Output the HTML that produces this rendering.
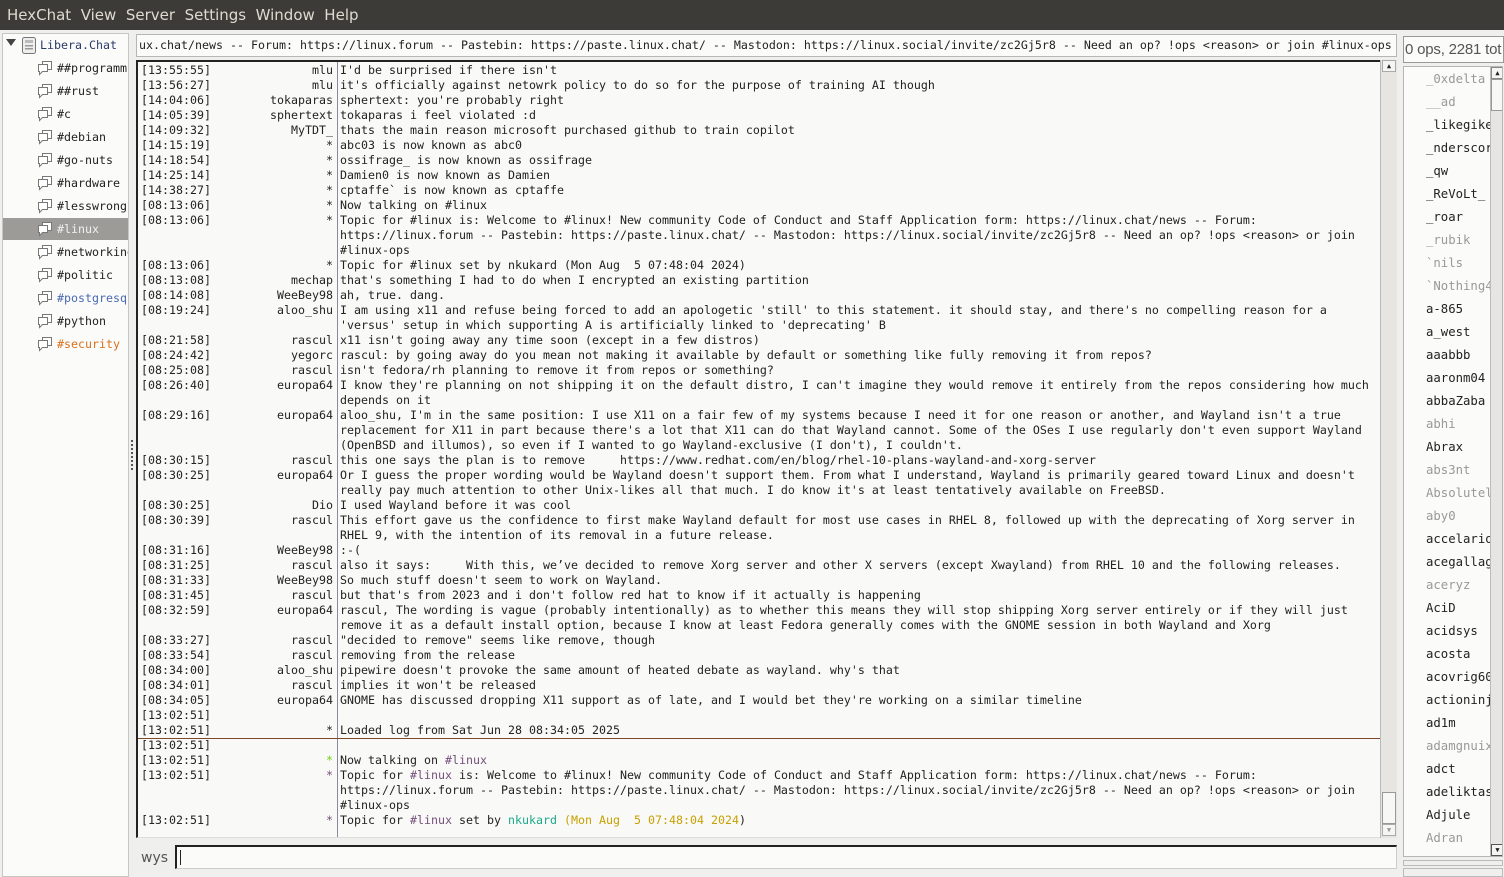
<!DOCTYPE html>
<html><head><meta charset="utf-8"><style>
*{box-sizing:border-box;margin:0;padding:0}
body{width:1504px;height:877px;background:#efefed;position:relative;overflow:hidden;font-family:"DejaVu Sans Mono","Liberation Mono",monospace;font-size:11.63px;color:#222}
.menu{position:absolute;left:0;top:0;width:1504px;height:30px;background:#3c3b37;color:#dfdbd2;font-family:"DejaVu Sans","Liberation Sans",sans-serif;font-size:15px;line-height:30px;white-space:pre;padding-left:7px}
.tree{position:absolute;left:2px;top:33px;width:127px;height:844px;background:#fbfbfa;border:1px solid #c8c6c2;overflow:hidden}
.ti{position:absolute;left:34px;height:22px;line-height:22px;white-space:pre;width:92px;overflow:hidden}
.ti svg{position:absolute;left:0;top:3px}
.ti span{position:absolute;left:20px}
.sel{background:#9d9b97;color:#f0f0f0}
.topic{position:absolute;left:136px;top:34px;width:1261px;height:23px;background:#fbfbfa;border:1px solid #b8b6b2;line-height:21px;white-space:pre;overflow:hidden;padding-left:2px}
.log{position:absolute;left:136px;top:60px;width:1261px;height:778px;background:#f9f9f7;border:2px solid #222;border-right:1px solid #bbb;border-bottom:1px solid #ddd;overflow:hidden}
.r{position:absolute;left:0;height:15px;line-height:15px;white-space:pre;width:1240px;margin-top:1px}
.t{position:absolute;left:3px}
.n{position:absolute;right:1045px;text-align:right}
.m{position:absolute;left:202px}
.sep{position:absolute;left:199px;top:0;width:1px;height:780px;background:#8a8a9a}
.vsb{position:absolute;left:1380px;top:60px;width:17px;height:778px;background:#e6e5e2;border-left:1px solid #bbb}
.p{color:#75507b}.g{color:#1aa88a}.y{color:#c9a000}.ga{color:#73d216}
.ul{position:absolute;left:1403px;top:66px;width:100px;height:791px;background:#fbfbfa;border:1px solid #b8b6b2;overflow:hidden}
.u{position:absolute;left:22px;height:23px;line-height:23px;white-space:pre;font-size:12.3px;margin-top:1px}
.aw{color:#999}
</style></head><body>
<div class="menu">HexChat  View  Server  Settings  Window  Help</div>
<svg width="0" height="0" style="position:absolute"><defs><symbol id="b" viewBox="0 0 16 16"><path d="M5.5 1.5h9v8h-9z" fill="#fff" stroke="#777"/><path d="M1.5 4.5h9v7h-5l-3 3v-3h-1z" fill="#fff" stroke="#777"/></symbol></defs></svg>
<div class="tree">
<div style="position:absolute;left:3px;top:5px;width:0;height:0;border-left:5px solid transparent;border-right:5px solid transparent;border-top:7px solid #444"></div>
<svg style="position:absolute;left:19px;top:3px" width="14" height="17" viewBox="0 0 14 17"><rect x="0.5" y="0.5" width="13" height="16" rx="2" fill="#eee" stroke="#777"/><rect x="3" y="3" width="8" height="3" fill="#bbb"/><rect x="3" y="8" width="8" height="1.5" fill="#999"/><rect x="3" y="11" width="8" height="1.5" fill="#999"/></svg>
<div style="position:absolute;left:37px;top:0;line-height:22px;color:#2a3a6a">Libera.Chat</div>
<div class="ti" style="top:23px"><svg width="16" height="16"><use href="#b"/></svg><span>##programm</span></div>
<div class="ti" style="top:46px"><svg width="16" height="16"><use href="#b"/></svg><span>##rust</span></div>
<div class="ti" style="top:69px"><svg width="16" height="16"><use href="#b"/></svg><span>#c</span></div>
<div class="ti" style="top:92px"><svg width="16" height="16"><use href="#b"/></svg><span>#debian</span></div>
<div class="ti" style="top:115px"><svg width="16" height="16"><use href="#b"/></svg><span>#go-nuts</span></div>
<div class="ti" style="top:138px"><svg width="16" height="16"><use href="#b"/></svg><span>#hardware</span></div>
<div class="ti" style="top:161px"><svg width="16" height="16"><use href="#b"/></svg><span>#lesswrong</span></div>
<div class="ti sel" style="top:184px;left:0;width:127px"><svg width="16" height="16" style="left:34px"><use href="#b"/></svg><span style="left:54px">#linux</span></div>
<div class="ti" style="top:207px"><svg width="16" height="16"><use href="#b"/></svg><span>#networking</span></div>
<div class="ti" style="top:230px"><svg width="16" height="16"><use href="#b"/></svg><span>#politic</span></div>
<div class="ti" style="top:253px;color:#4a6ab0"><svg width="16" height="16"><use href="#b"/></svg><span>#postgresql</span></div>
<div class="ti" style="top:276px"><svg width="16" height="16"><use href="#b"/></svg><span>#python</span></div>
<div class="ti" style="top:299px;color:#d9701a"><svg width="16" height="16"><use href="#b"/></svg><span>#security</span></div>
</div>
<div style="position:absolute;left:131px;top:440px;width:2px;height:30px;border-left:2px dotted #555"></div>
<div class="topic">ux.chat/news -- Forum: https://linux.forum -- Pastebin: https://paste.linux.chat/ -- Mastodon: https://linux.social/invite/zc2Gj5r8 -- Need an op? !ops &lt;reason&gt; or join #linux-ops</div>
<div class="log">
<div class="sep"></div>
<div style="position:absolute;left:0;top:676px;width:1244px;height:1px;background:#7a4a2a"></div>
<div class="r" style="top:0"><span class="t">[13:55:55]</span><span class="n">mlu</span><span class="m">I'd be surprised if there isn't</span></div>
<div class="r" style="top:15px"><span class="t">[13:56:27]</span><span class="n">mlu</span><span class="m">it's officially against netowrk policy to do so for the purpose of training AI though</span></div>
<div class="r" style="top:30px"><span class="t">[14:04:06]</span><span class="n">tokaparas</span><span class="m">sphertext: you're probably right</span></div>
<div class="r" style="top:45px"><span class="t">[14:05:39]</span><span class="n">sphertext</span><span class="m">tokaparas i feel violated :d</span></div>
<div class="r" style="top:60px"><span class="t">[14:09:32]</span><span class="n">MyTDT_</span><span class="m">thats the main reason microsoft purchased github to train copilot</span></div>
<div class="r" style="top:75px"><span class="t">[14:15:19]</span><span class="n">*</span><span class="m">abc03 is now known as abc0</span></div>
<div class="r" style="top:90px"><span class="t">[14:18:54]</span><span class="n">*</span><span class="m">ossifrage_ is now known as ossifrage</span></div>
<div class="r" style="top:105px"><span class="t">[14:25:14]</span><span class="n">*</span><span class="m">Damien0 is now known as Damien</span></div>
<div class="r" style="top:120px"><span class="t">[14:38:27]</span><span class="n">*</span><span class="m">cptaffe` is now known as cptaffe</span></div>
<div class="r" style="top:135px"><span class="t">[08:13:06]</span><span class="n">*</span><span class="m">Now talking on #linux</span></div>
<div class="r" style="top:150px"><span class="t">[08:13:06]</span><span class="n">*</span><span class="m">Topic for #linux is: Welcome to #linux! New community Code of Conduct and Staff Application form: https://linux.chat/news -- Forum:<br>https://linux.forum -- Pastebin: https://paste.linux.chat/ -- Mastodon: https://linux.social/invite/zc2Gj5r8 -- Need an op? !ops &lt;reason&gt; or join<br>#linux-ops</span></div>
<div class="r" style="top:195px"><span class="t">[08:13:06]</span><span class="n">*</span><span class="m">Topic for #linux set by nkukard (Mon Aug  5 07:48:04 2024)</span></div>
<div class="r" style="top:210px"><span class="t">[08:13:08]</span><span class="n">mechap</span><span class="m">that's something I had to do when I encrypted an existing partition</span></div>
<div class="r" style="top:225px"><span class="t">[08:14:08]</span><span class="n">WeeBey98</span><span class="m">ah, true. dang.</span></div>
<div class="r" style="top:240px"><span class="t">[08:19:24]</span><span class="n">aloo_shu</span><span class="m">I am using x11 and refuse being forced to add an apologetic 'still' to this statement. it should stay, and there's no compelling reason for a<br>'versus' setup in which supporting A is artificially linked to 'deprecating' B</span></div>
<div class="r" style="top:270px"><span class="t">[08:21:58]</span><span class="n">rascul</span><span class="m">x11 isn't going away any time soon (except in a few distros)</span></div>
<div class="r" style="top:285px"><span class="t">[08:24:42]</span><span class="n">yegorc</span><span class="m">rascul: by going away do you mean not making it available by default or something like fully removing it from repos?</span></div>
<div class="r" style="top:300px"><span class="t">[08:25:08]</span><span class="n">rascul</span><span class="m">isn't fedora/rh planning to remove it from repos or something?</span></div>
<div class="r" style="top:315px"><span class="t">[08:26:40]</span><span class="n">europa64</span><span class="m">I know they're planning on not shipping it on the default distro, I can't imagine they would remove it entirely from the repos considering how much<br>depends on it</span></div>
<div class="r" style="top:345px"><span class="t">[08:29:16]</span><span class="n">europa64</span><span class="m">aloo_shu, I'm in the same position: I use X11 on a fair few of my systems because I need it for one reason or another, and Wayland isn't a true<br>replacement for X11 in part because there's a lot that X11 can do that Wayland cannot. Some of the OSes I use regularly don't even support Wayland<br>(OpenBSD and illumos), so even if I wanted to go Wayland-exclusive (I don't), I couldn't.</span></div>
<div class="r" style="top:390px"><span class="t">[08:30:15]</span><span class="n">rascul</span><span class="m">this one says the plan is to remove     https://www.redhat.com/en/blog/rhel-10-plans-wayland-and-xorg-server</span></div>
<div class="r" style="top:405px"><span class="t">[08:30:25]</span><span class="n">europa64</span><span class="m">Or I guess the proper wording would be Wayland doesn't support them. From what I understand, Wayland is primarily geared toward Linux and doesn't<br>really pay much attention to other Unix-likes all that much. I do know it's at least tentatively available on FreeBSD.</span></div>
<div class="r" style="top:435px"><span class="t">[08:30:25]</span><span class="n">Dio</span><span class="m">I used Wayland before it was cool</span></div>
<div class="r" style="top:450px"><span class="t">[08:30:39]</span><span class="n">rascul</span><span class="m">This effort gave us the confidence to first make Wayland default for most use cases in RHEL 8, followed up with the deprecating of Xorg server in<br>RHEL 9, with the intention of its removal in a future release.</span></div>
<div class="r" style="top:480px"><span class="t">[08:31:16]</span><span class="n">WeeBey98</span><span class="m">:-(</span></div>
<div class="r" style="top:495px"><span class="t">[08:31:25]</span><span class="n">rascul</span><span class="m">also it says:     With this, we’ve decided to remove Xorg server and other X servers (except Xwayland) from RHEL 10 and the following releases.</span></div>
<div class="r" style="top:510px"><span class="t">[08:31:33]</span><span class="n">WeeBey98</span><span class="m">So much stuff doesn't seem to work on Wayland.</span></div>
<div class="r" style="top:525px"><span class="t">[08:31:45]</span><span class="n">rascul</span><span class="m">but that's from 2023 and i don't follow red hat to know if it actually is happening</span></div>
<div class="r" style="top:540px"><span class="t">[08:32:59]</span><span class="n">europa64</span><span class="m">rascul, The wording is vague (probably intentionally) as to whether this means they will stop shipping Xorg server entirely or if they will just<br>remove it as a default install option, because I know at least Fedora generally comes with the GNOME session in both Wayland and Xorg</span></div>
<div class="r" style="top:570px"><span class="t">[08:33:27]</span><span class="n">rascul</span><span class="m">"decided to remove" seems like remove, though</span></div>
<div class="r" style="top:585px"><span class="t">[08:33:54]</span><span class="n">rascul</span><span class="m">removing from the release</span></div>
<div class="r" style="top:600px"><span class="t">[08:34:00]</span><span class="n">aloo_shu</span><span class="m">pipewire doesn't provoke the same amount of heated debate as wayland. why's that</span></div>
<div class="r" style="top:615px"><span class="t">[08:34:01]</span><span class="n">rascul</span><span class="m">implies it won't be released</span></div>
<div class="r" style="top:630px"><span class="t">[08:34:05]</span><span class="n">europa64</span><span class="m">GNOME has discussed dropping X11 support as of late, and I would bet they're working on a similar timeline</span></div>
<div class="r" style="top:645px"><span class="t">[13:02:51]</span></div>
<div class="r" style="top:660px"><span class="t">[13:02:51]</span><span class="n">*</span><span class="m">Loaded log from Sat Jun 28 08:34:05 2025</span></div>
<div class="r" style="top:675px"><span class="t">[13:02:51]</span></div>
<div class="r" style="top:690px"><span class="t">[13:02:51]</span><span class="n ga">*</span><span class="m">Now talking on <span class="p">#linux</span></span></div>
<div class="r" style="top:705px"><span class="t">[13:02:51]</span><span class="n p">*</span><span class="m">Topic for <span class="p">#linux</span> is: Welcome to #linux! New community Code of Conduct and Staff Application form: https://linux.chat/news -- Forum:<br>https://linux.forum -- Pastebin: https://paste.linux.chat/ -- Mastodon: https://linux.social/invite/zc2Gj5r8 -- Need an op? !ops &lt;reason&gt; or join<br>#linux-ops</span></div>
<div class="r" style="top:750px"><span class="t">[13:02:51]</span><span class="n p">*</span><span class="m">Topic for <span class="p">#linux</span> set by <span class="g">nkukard</span> <span class="y">(Mon Aug  5 07:48:04 2024</span>)</span></div>
</div>
<div class="vsb"><div style="position:absolute;left:1px;top:0;width:14px;height:12px;background:#f5f5f3;border:1px solid #aaa;font-size:7px;text-align:center;line-height:10px">▲</div><div style="position:absolute;left:1px;top:732px;width:14px;height:32px;background:#f7f7f5;border:1px solid #999"></div><div style="position:absolute;left:1px;top:764px;width:14px;height:12px;background:#f5f5f3;border:1px solid #aaa;font-size:7px;text-align:center;line-height:10px;color:#999">▼</div></div>
<div style="position:absolute;left:141px;top:846px;font-family:'DejaVu Sans','Liberation Sans',sans-serif;font-size:14px;line-height:24px;color:#555">wys</div>
<div style="position:absolute;left:175px;top:845px;width:1222px;height:24px;background:#fbfbfa;border:2px solid #222;border-right:1px solid #ccc;border-bottom:1px solid #ccc"><div style="position:absolute;left:3px;top:3px;width:1px;height:15px;background:#222"></div></div>
<div style="position:absolute;left:1403px;top:36px;width:101px;height:27px;background:#fbfbfa;border:1px solid #999;font-family:'Liberation Sans','DejaVu Sans',sans-serif;font-size:15px;line-height:25px;color:#555;white-space:pre;overflow:hidden;padding-left:1px;letter-spacing:-0.2px">0 ops, 2281 tot</div>
<div class="ul">
<div class="u aw" style="top:0">_0xdelta</div><div class="u aw" style="top:23px">__ad</div><div class="u" style="top:46px">_likegike</div><div class="u" style="top:69px">_nderscor</div><div class="u" style="top:92px">_qw</div><div class="u" style="top:115px">_ReVoLt_</div><div class="u" style="top:138px">_roar</div><div class="u aw" style="top:161px">_rubik</div><div class="u aw" style="top:184px">`nils</div><div class="u aw" style="top:207px">`Nothing4</div><div class="u" style="top:230px">a-865</div><div class="u" style="top:253px">a_west</div><div class="u" style="top:276px">aaabbb</div><div class="u" style="top:299px">aaronm04</div><div class="u" style="top:322px">abbaZaba</div><div class="u aw" style="top:345px">abhi</div><div class="u" style="top:368px">Abrax</div><div class="u aw" style="top:391px">abs3nt</div><div class="u aw" style="top:414px">Absolutel</div><div class="u aw" style="top:437px">aby0</div><div class="u" style="top:460px">accelario</div><div class="u" style="top:483px">acegallag</div><div class="u aw" style="top:506px">aceryz</div><div class="u" style="top:529px">AciD</div><div class="u" style="top:552px">acidsys</div><div class="u" style="top:575px">acosta</div><div class="u" style="top:598px">acovrig60</div><div class="u" style="top:621px">actioninj</div><div class="u" style="top:644px">ad1m</div><div class="u aw" style="top:667px">adamgnuix</div><div class="u" style="top:690px">adct</div><div class="u" style="top:713px">adeliktas</div><div class="u" style="top:736px">Adjule</div><div class="u aw" style="top:759px">Adran</div>
<div style="position:absolute;left:86px;top:0;width:14px;height:791px;background:#e6e5e2;border-left:1px solid #bbb"><div style="position:absolute;left:0;top:0;width:13px;height:12px;background:#f5f5f3;border:1px solid #888;font-size:7px;text-align:center;line-height:10px">▲</div><div style="position:absolute;left:0;top:12px;width:13px;height:32px;background:#f7f7f5;border:1px solid #999"></div><div style="position:absolute;left:0;top:777px;width:13px;height:12px;background:#f5f5f3;border:1px solid #555;font-size:7px;text-align:center;line-height:10px">▼</div></div>
</div>
<div style="position:absolute;left:1403px;top:860px;width:100px;height:6px;border:1px solid #bbb"></div>
<div style="position:absolute;left:1403px;top:868px;width:100px;height:9px;border:1px solid #bbb"></div>
</body></html>
